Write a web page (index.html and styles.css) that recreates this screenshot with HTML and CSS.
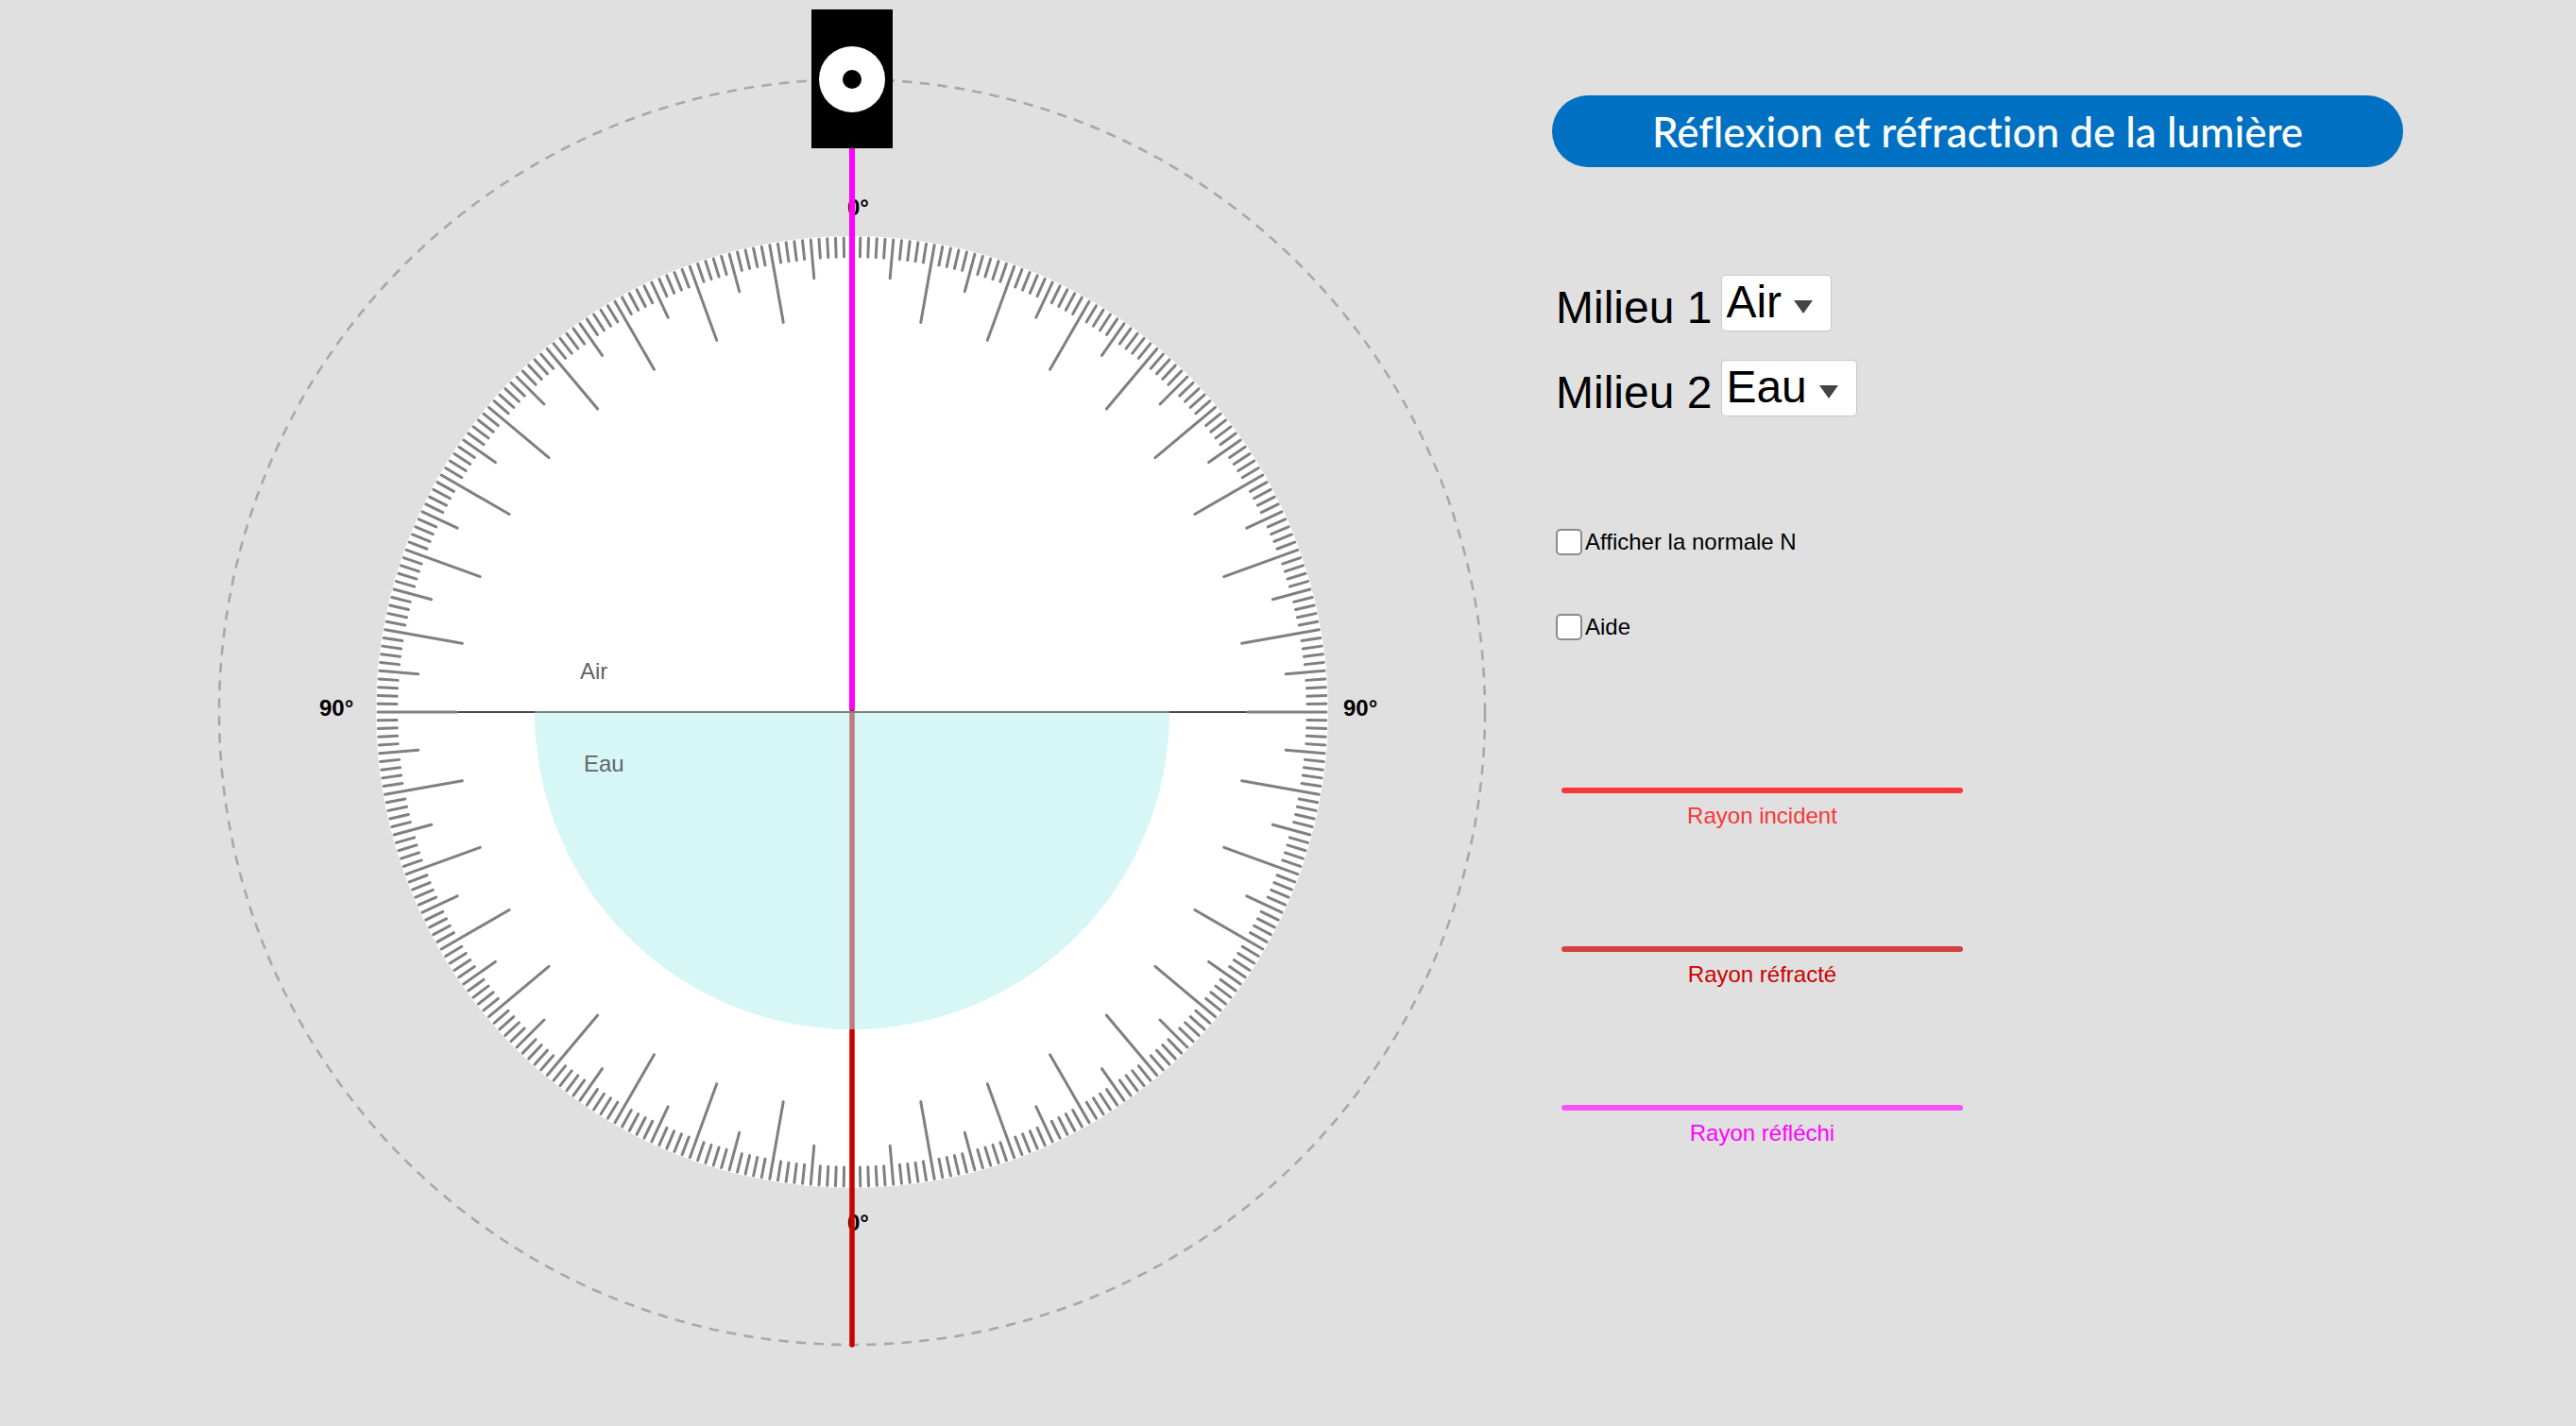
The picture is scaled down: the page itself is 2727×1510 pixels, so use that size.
FILE: index.html
```html
<!DOCTYPE html>
<html lang="fr">
<head>
<meta charset="utf-8">
<meta name="viewport" content="width=device-width, initial-scale=1">
<title>Réflexion et réfraction de la lumière</title>
<link rel="stylesheet" href="styles.css">
</head>
<body>
<main class="app">
  <svg class="scene" viewBox="0 0 1608 1508" role="img" aria-label="Disque optique gradué">
    <defs>
      <line id="minor" y1="-502" y2="-482"/>
      <g id="sector">
        <line y1="-502" y2="-419"/>
        <use href="#minor" transform="rotate(1)"/>
        <use href="#minor" transform="rotate(2)"/>
        <use href="#minor" transform="rotate(3)"/>
        <use href="#minor" transform="rotate(4)"/>
        <line y1="-502" y2="-461" transform="rotate(5)"/>
        <use href="#minor" transform="rotate(6)"/>
        <use href="#minor" transform="rotate(7)"/>
        <use href="#minor" transform="rotate(8)"/>
        <use href="#minor" transform="rotate(9)"/>
      </g>
      <g id="quadrant">
        <use href="#sector"/>
        <use href="#sector" transform="rotate(10)"/>
        <use href="#sector" transform="rotate(20)"/>
        <use href="#sector" transform="rotate(30)"/>
        <use href="#sector" transform="rotate(40)"/>
        <use href="#sector" transform="rotate(50)"/>
        <use href="#sector" transform="rotate(60)"/>
        <use href="#sector" transform="rotate(70)"/>
        <use href="#sector" transform="rotate(80)"/>
      </g>
    </defs>

    <g transform="translate(902 754)">
      <circle class="orbit" r="670" pathLength="4212"/>
      <circle class="dial" r="504"/>
      <line class="surface" x1="-503" x2="503"/>
      <g class="ticks">
        <use href="#quadrant"/>
        <use href="#quadrant" transform="rotate(90)"/>
        <use href="#quadrant" transform="rotate(180)"/>
        <use href="#quadrant" transform="rotate(270)"/>
      </g>
    </g>

    <text class="angle" x="897" y="228">0°</text>
    <text class="angle" x="897" y="1303">0°</text>
    <text class="angle" x="338" y="758">90°</text>
    <text class="angle" x="1422" y="758">90°</text>

    <line class="ray refracted" x1="902" y1="754" x2="902" y2="1424"/>
    <path class="water" d="M566 754 A336 336 0 0 0 1238 754 Z"/>
    <line class="surface over-water" x1="566" y1="754" x2="1238" y2="754"/>
    <line class="ray reflected" x1="902" y1="156" x2="902" y2="752"/>

    <text class="medium" x="614" y="719">Air</text>
    <text class="medium" x="618" y="817">Eau</text>

    <rect class="source" x="859" y="10" width="86" height="147"/>
    <circle class="lens" cx="902" cy="84" r="35"/>
    <circle class="pupil" cx="902" cy="84" r="10"/>
  </svg>

  <section class="panel">
    <h1 class="title">Réflexion et réfraction de la lumière</h1>

    <form class="controls">
      <div class="medium-row">
        <label for="m1">Milieu 1</label>
        <span class="picker"><select id="m1"><option>Air</option></select></span>
      </div>
      <div class="medium-row">
        <label for="m2">Milieu 2</label>
        <span class="picker"><select id="m2"><option>Eau</option></select></span>
      </div>
      <div class="checks">
        <label class="check"><input type="checkbox">Afficher la normale N</label>
        <label class="check"><input type="checkbox">Aide</label>
      </div>
    </form>

    <ul class="legend">
      <li class="incident">Rayon incident</li>
      <li class="refracted-key">Rayon réfracté</li>
      <li class="reflected-key">Rayon réfléchi</li>
    </ul>
  </section>
</main>
</body>
</html>
```

FILE: styles.css
```css
* {
  box-sizing: border-box;
}

body {
  margin: 0;
  background: #e0e0e0;
  color: #000;
  font: 24px/28px "Liberation Sans", Arial, sans-serif;
}

.app {
  display: grid;
  grid-template-columns: 1608fr 1119fr;
  align-items: start;
}

.scene {
  display: block;
  width: 100%;
  height: auto;
}

.orbit {
  fill: none;
  stroke: #a8a8a8;
  stroke-width: 2.6;
  stroke-dasharray: 10.5 8.176;
}

.dial {
  fill: #fff;
}

.ticks {
  stroke: #808080;
  stroke-width: 3;
  stroke-linecap: round;
}

.surface {
  stroke: #484848;
  stroke-width: 2;
}

.over-water {
  stroke: #7a8080;
}

.angle {
  font-weight: 700;
}

.medium {
  fill: #616666;
}

.ray {
  stroke-width: 5.5;
  stroke-linecap: round;
}

.refracted {
  stroke: #c00;
}

.reflected {
  stroke: #f0f;
  stroke-width: 6;
  stroke-linecap: butt;
}

.water {
  fill: #b3eeee;
  fill-opacity: 0.53;
}

.source {
  fill: #000;
}

.lens {
  fill: #fff;
}

.pupil {
  fill: #000;
}

.panel {
  padding: 101px 183px 0 35px;
}

.title {
  margin: 0;
  border-radius: 38px;
  background: #0071c2;
  color: #fff;
  font: 500 44px/76px Lato, sans-serif;
  font-variant-ligatures: none;
  text-align: center;
  white-space: nowrap;
}

.controls {
  padding: 114px 0 0 4px;
}

.medium-row {
  display: flex;
  align-items: flex-start;
  gap: 10px;
  height: 60px;
  margin-bottom: 30px;
  font-size: 48px;
  line-height: 56px;
}

.medium-row label {
  padding-top: 7px;
}

.picker {
  display: grid;
  align-items: center;
}

.picker::after {
  grid-area: 1 / 1;
  justify-self: end;
  margin: 8px 20px 0 0;
  border: solid transparent;
  border-width: 14px 10px 0;
  border-top-color: #444;
  content: "";
  pointer-events: none;
}

.picker select {
  grid-area: 1 / 1;
  height: 60px;
  padding: 0 52px 4px 4px;
  border: 1px solid #c8c8c8;
  border-radius: 5px;
  background: #fff;
  color: #000;
  font: inherit;
  appearance: none;
}

.checks {
  display: grid;
  gap: 62px;
  padding-top: 89px;
}

.check {
  display: flex;
  align-items: center;
  gap: 3px;
}

.check input {
  width: 28px;
  height: 28px;
  margin: 0;
  border: 2px solid #8c8c8c;
  border-radius: 5px;
  background: #fff;
  appearance: none;
}

.check input:checked {
  background: #0071c2;
}

.legend {
  display: grid;
  gap: 124px;
  width: 425px;
  margin: 156px 0 0 10px;
  padding: 0;
  list-style: none;
  text-align: center;
}

.legend li::before {
  display: block;
  height: 6px;
  margin-bottom: 10px;
  border-radius: 3px;
  background: #f73838;
  content: "";
}

.legend .incident {
  color: #f73838;
}

.legend .refracted-key {
  color: #c00;
}

.legend .refracted-key::before {
  background: #d34040;
}

.legend .reflected-key {
  color: #f0f;
}

.legend .reflected-key::before {
  background: #f553f5;
}
```
